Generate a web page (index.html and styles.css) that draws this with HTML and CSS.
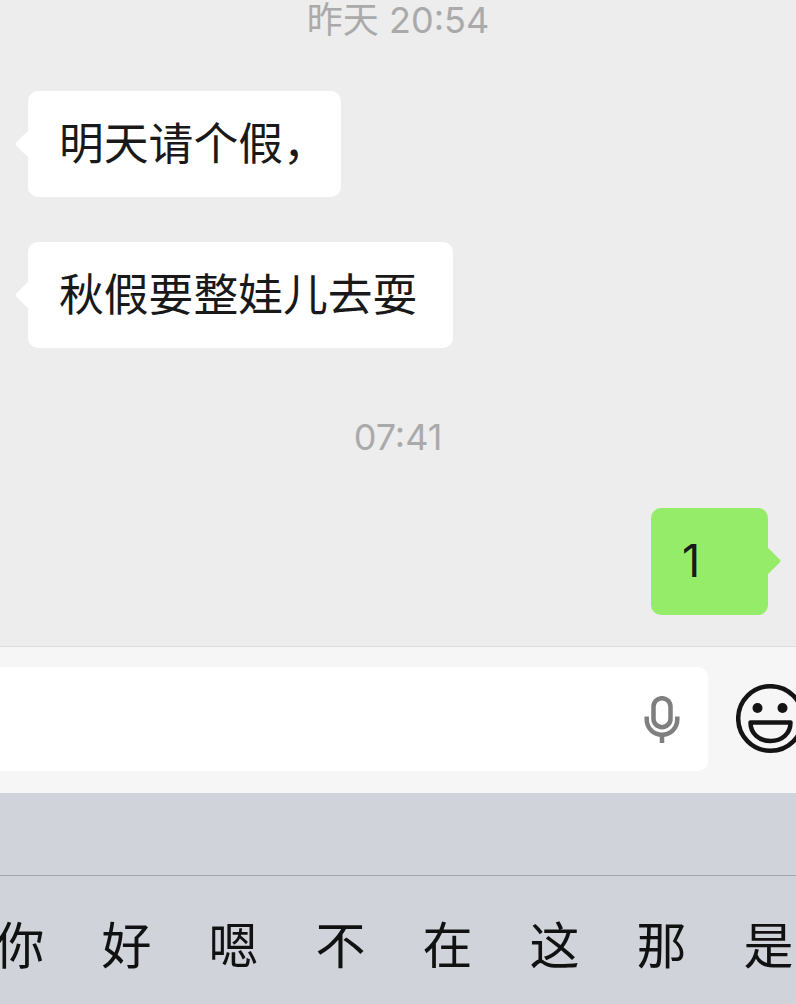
FILE: index.html
```html
<!DOCTYPE html>
<html lang="zh-CN">
<head>
  <meta charset="UTF-8">
  <title>聊天</title>
  <link rel="stylesheet" href="styles.css">
</head>
<body>

<div class="chat">
  <div class="time time-top">昨天 20:54</div>

  <div class="row">
    <div class="bubble bubble-in">明天请个假，</div>
  </div>
  <div class="row">
    <div class="bubble bubble-in">秋假要整娃儿去耍</div>
  </div>

  <div class="time time-mid">07:41</div>

  <div class="row row-out">
    <div class="bubble bubble-out">1</div>
  </div>
</div>

<div class="input-bar">
  <div class="input-box">
    <svg class="mic" width="36" height="47" viewBox="0 0 36 47" fill="none" stroke="#7f7f7f" stroke-width="4.5">
      <rect x="9.500" y="2.200" width="17" height="29" rx="8.500"/>
      <path d="M2.700 20.500v3a15.300 15.300 0 0 0 30.600 0v-3"/>
      <path d="M18 39v8"/>
    </svg>
  </div>
  <svg class="emoji" width="70" height="70" viewBox="0 0 70 70" fill="none" stroke="#141414" stroke-width="4.500">
    <circle cx="34.500" cy="34.500" r="32.300"/>
    <circle cx="21.500" cy="24" r="5" fill="#141414" stroke="none"/>
    <circle cx="46.500" cy="24" r="5" fill="#141414" stroke="none"/>
    <path d="M14.500 38.500h40c0 11-8.500 18.500-20 18.500s-20-7.500-20-18.500z" stroke-linejoin="round"/>
  </svg>
</div>

<div class="keyboard">
  <div class="key-top"></div>
  <div class="candidates">
    <span>你</span>
    <span>好</span>
    <span>嗯</span>
    <span>不</span>
    <span>在</span>
    <span>这</span>
    <span>那</span>
    <span>是</span>
  </div>
</div>

</body>
</html>
```

FILE: styles.css
```css
html, body {
  margin: 0;
  padding: 0;
}

body {
  width: 796px;
  height: 1004px;
  overflow: hidden;
  display: flex;
  flex-direction: column;
  font-family: Inter, 'Noto Sans CJK SC', sans-serif;
  background: #ededed;
}

.chat {
  height: 646px;
  flex-shrink: 0;
  box-sizing: border-box;
  overflow: hidden;
  background: #ededed;
}

.time {
  text-align: center;
  font-size: 36px;
  line-height: 40px;
  color: #aaaaaa;
}

.time-top {
  margin-top: 0;
  margin-bottom: 51px;
}

.time-mid {
  margin-top: 69px;
  margin-bottom: 51px;
}

.row {
  display: flex;
  padding: 0 28px;
  margin-bottom: 45px;
}

.row-out {
  justify-content: flex-end;
}

.bubble {
  position: relative;
  height: 106px;
  box-sizing: border-box;
  padding: 0 36px 0 31px;
  border-radius: 10px;
  font-size: 44.800px;
  line-height: 106px;
  color: #191919;
  white-space: nowrap;
  font-feature-settings: "halt";
}

.bubble::before {
  content: "";
  position: absolute;
  top: 43px;
  width: 20px;
  height: 20px;
  border-radius: 2px;
  transform: rotate(45deg);
}

.bubble-in {
  background: #ffffff;
}

.bubble-in::before {
  left: -9px;
  background: #ffffff;
}

.bubble-out {
  width: 117px;
  height: 107px;
  background: #95ec69;
}

.bubble-out::before {
  right: -9px;
  background: #95ec69;
}

.input-bar {
  height: 147px;
  flex-shrink: 0;
  box-sizing: border-box;
  padding-top: 20px;
  display: flex;
  align-items: flex-start;
  gap: 28px;
  background: #f6f6f6;
  border-top: 1px solid #dcdcdc;
}

.input-box {
  width: 720px;
  height: 104px;
  margin-left: -12px;
  flex-shrink: 0;
  box-sizing: border-box;
  padding-right: 28px;
  display: flex;
  align-items: center;
  justify-content: flex-end;
  background: #ffffff;
  border-radius: 10px;
}

.emoji {
  flex-shrink: 0;
  margin-top: 17px;
}

.keyboard {
  flex: 1;
  background: #d1d3db;
}

.key-top {
  height: 82px;
  border-bottom: 1px solid #a3a5ac;
}

.candidates {
  display: flex;
  margin-left: -34px;
  padding-top: 40px;
}

.candidates span {
  width: 107px;
  flex-shrink: 0;
  text-align: center;
  font-size: 50px;
  line-height: 60px;
  color: #111111;
}
```
